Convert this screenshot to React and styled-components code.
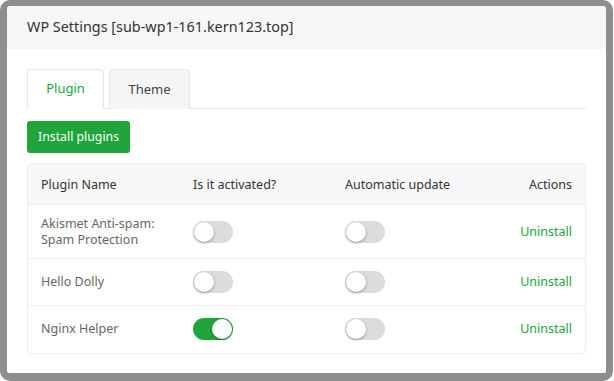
import React, { useState } from "react";
import styled, { createGlobalStyle } from "styled-components";

const Global = createGlobalStyle`
  html, body { margin: 0; padding: 0; background: #ffffff; }
  body { font-family: "Noto Sans", "Liberation Sans", sans-serif; }
  * { box-sizing: border-box; }
`;

const Frame = styled.div`
  width: 613px;
  border-style: solid;
  border-color: #8e8e8e;
  border-width: 6px 7px 8px 7px;
  border-radius: 10px;
  background: #ffffff;
  overflow: hidden;
`;

const Header = styled.div`
  height: 43px;
  display: flex;
  align-items: center;
  padding: 0 0 2px 20px;
  background: #f7f7f7;
  color: #333333;
  font-size: 14.4px;
`;

const Body = styled.div`
  padding: 20px 20px 19px 20px;
  display: flex;
  flex-direction: column;
`;

const TabBar = styled.div`
  display: flex;
  gap: 5px;
  height: 40px;
  border-bottom: 1px solid #e4e7ed;
  padding-right: 1px;
`;

const Tab = styled.div`
  width: ${(p) => (p.$active ? "77px" : "81px")};
  height: 40px;
  display: flex;
  align-items: center;
  justify-content: center;
  border: 1px solid #e4e7ed;
  border-bottom: ${(p) => (p.$active ? "1px solid #ffffff" : "none")};
  border-radius: 4px 4px 0 0;
  background: ${(p) => (p.$active ? "#ffffff" : "#f5f5f7")};
  color: ${(p) => (p.$active ? "#20a53a" : "#444444")};
  font-size: 13px;
  padding-bottom: 2px;
`;

const Button = styled.button`
  margin-top: 12px;
  align-self: flex-start;
  height: 32px;
  padding: 0 11px 1px;
  border: none;
  border-radius: 3px;
  background: #20a53a;
  color: #ffffff;
  font-family: inherit;
  font-size: 12.3px;
`;

const TableWrap = styled.div`
  margin-top: 10px;
  border: 1px solid #ebeef5;
  border-radius: 4px;
  overflow: hidden;
`;

const Table = styled.table`
  width: 100%;
  border-collapse: collapse;
  table-layout: fixed;
  font-size: 12.5px;
`;

const Th = styled.th`
  text-align: ${(p) => p.$align || "left"};
  font-weight: normal;
  color: #333333;
  background: #f8f8fa;
  padding: 13px 13px 12px;
  line-height: 15px;
  border-bottom: 1px solid #ebeef5;
`;

const Td = styled.td`
  text-align: ${(p) => p.$align || "left"};
  color: #666666;
  padding: 10px 13px;
  line-height: 16px;
  vertical-align: middle;
  border-top: ${(p) => (p.$first ? "none" : "1px solid #ebeef5")};
`;

const Row = styled.tr`
  height: ${(p) => p.$h}px;
`;

const Link = styled.span`
  color: #20a53a;
  cursor: pointer;
`;

const SwitchTrack = styled.span`
  display: inline-block;
  position: relative;
  width: 40px;
  height: 22px;
  border-radius: 11px;
  background: ${(p) => (p.$on ? "#20a53a" : "#dcdcdc")};
  vertical-align: middle;
  cursor: pointer;
`;

const Knob = styled.span`
  position: absolute;
  top: 1px;
  left: ${(p) => (p.$on ? "19px" : "1px")};
  width: 20px;
  height: 20px;
  border-radius: 50%;
  background: #ffffff;
  box-shadow: 0 1px 3px rgba(0, 0, 0, 0.35);
`;

function Switch({ initial }) {
  const [on, setOn] = useState(initial);
  return (
    <SwitchTrack $on={on} onClick={() => setOn(!on)}>
      <Knob $on={on} />
    </SwitchTrack>
  );
}

const plugins = [
  { name: ["Akismet Anti-spam:", "Spam Protection"], active: false, auto: false, h: 54 },
  { name: ["Hello Dolly"], active: false, auto: false, h: 47 },
  { name: ["Nginx Helper"], active: true, auto: false, h: 47 },
];

export default function App() {
  const [tab, setTab] = useState("plugin");
  return (
    <>
      <Global />
      <Frame>
        <Header>WP Settings [sub-wp1-161.kern123.top]</Header>
        <Body>
          <TabBar>
            <Tab $active={tab === "plugin"} onClick={() => setTab("plugin")}>Plugin</Tab>
            <Tab $active={tab === "theme"} onClick={() => setTab("theme")}>Theme</Tab>
          </TabBar>
          <Button>Install plugins</Button>
          <TableWrap>
            <Table>
              <colgroup>
                <col style={{ width: 152 }} />
                <col style={{ width: 152 }} />
                <col style={{ width: 152 }} />
                <col />
              </colgroup>
              <thead>
                <tr>
                  <Th>Plugin Name</Th>
                  <Th>Is it activated?</Th>
                  <Th>Automatic update</Th>
                  <Th $align="right">Actions</Th>
                </tr>
              </thead>
              <tbody>
                {plugins.map((p, i) => (
                  <Row key={i} $h={p.h}>
                    <Td $first={i === 0}>
                      {p.name.map((l, j) => (
                        <React.Fragment key={j}>
                          {j > 0 && <br />}
                          {l}
                        </React.Fragment>
                      ))}
                    </Td>
                    <Td $first={i === 0}><Switch initial={p.active} /></Td>
                    <Td $first={i === 0}><Switch initial={p.auto} /></Td>
                    <Td $first={i === 0} $align="right"><Link>Uninstall</Link></Td>
                  </Row>
                ))}
              </tbody>
            </Table>
          </TableWrap>
        </Body>
      </Frame>
    </>
  );
}
